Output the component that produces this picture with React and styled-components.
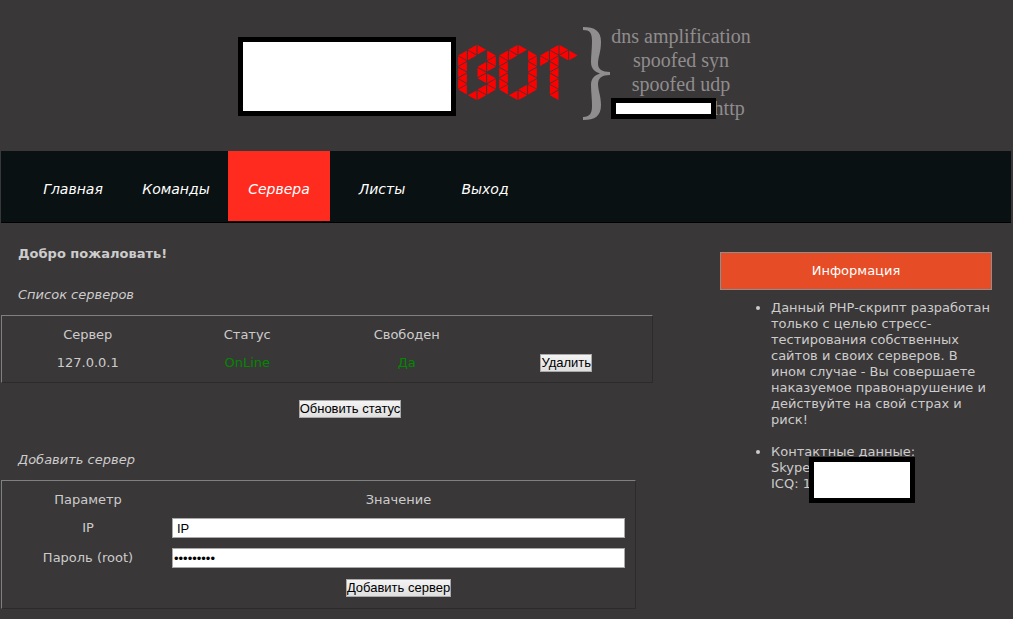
import React from 'react';
import styled, { createGlobalStyle } from 'styled-components';

const GlobalStyle = createGlobalStyle`
  body {
    margin: 0;
    padding: 0 2px 0 1px;
    background: #3a3738;
    color: #ccc;
    font: 13px/16px "DejaVu Sans", Verdana, sans-serif;
  }
`;

const Header = styled.header`
  display: flex;
  justify-content: center;
  align-items: flex-start;
  padding: 24px 23px 0 0;
  height: 127px;
`;

const Mask = styled.div`
  box-sizing: border-box;
  flex: none;
  width: ${props => props.$width}px;
  height: ${props => props.$height}px;
  border: 5px solid #000;
  background: #fff;
  list-style: none;
`;

const NameMask = styled(Mask)`
  margin: 13px 2px 0 0;
`;

const Bot = styled.svg`
  flex: none;
  margin: 20px 6px 0 0;
`;

const Brace = styled.svg`
  flex: none;
  margin: 3px 1px 0 0;
`;

const Features = styled.ul`
  position: relative;
  margin: 0;
  padding: 0;
  list-style: none;
  text-align: center;
  white-space: nowrap;
  color: #8f8d8e;
  font: 20px/24px "Liberation Serif", "Times New Roman", serif;
`;

const LastFeature = styled.li`
  padding-right: 6px;
  text-align: right;
`;

const FeatureMask = styled(Mask)`
  position: absolute;
  left: 0;
  bottom: 1px;
`;

const Nav = styled.nav`
  display: flex;
  gap: 1px;
  height: 71px;
  padding-left: 21px;
  border-bottom: 1px solid #000;
  background: #0a1112;
`;

const NavLink = styled.a`
  width: 102px;
  height: 70px;
  padding-top: 5px;
  box-sizing: border-box;
  line-height: 66px;
  text-align: center;
  text-decoration: none;
  font-size: 14px;
  font-style: italic;
  color: #fff;
  background: ${props => (props.$active ? '#ff2b1f' : 'transparent')};
`;

const Main = styled.div`
  display: grid;
  grid-template-columns: minmax(0, 1fr) 272px;
  gap: 21px;
  align-items: start;
  padding: 23px 19px 11px 0;
`;

const Welcome = styled.h1`
  margin: 0 0 25px;
  padding-left: 17px;
  font-size: 13px;
  line-height: 16px;
`;

const SectionTitle = styled.h2`
  margin: 0 0 12px;
  padding-left: 17px;
  font-size: 13px;
  font-weight: normal;
  font-style: italic;
  line-height: 16px;
`;

const Panel = styled.div`
  margin-right: ${props => props.$right}px;
  padding: 5px 6px;
  border: 1px solid;
  border-color: #808080 #2c2a2b #2c2a2b #808080;
`;

const Table = styled.table`
  width: 100%;
  table-layout: fixed;
  border-collapse: collapse;
  text-align: center;

  th,
  td {
    height: ${props => props.$rowHeight}px;
    padding: 0;
    font-weight: normal;
  }

  th {
    height: 27px;
  }
`;

const LabelCol = styled.col`
  width: 160px;
`;

const Green = styled.td`
  color: #080;
`;

const Button = styled.button`
  display: block;
  height: 18px;
  margin: 0 auto;
  padding: 0;
  border: 1px solid #a9a9a9;
  background: linear-gradient(#f4f4f4, #dfdfdf);
  color: #000;
  white-space: nowrap;
  font: 13px/16px "Liberation Sans", Arial, sans-serif;
`;

const Input = styled.input`
  display: block;
  box-sizing: border-box;
  width: calc(100% - 8px);
  height: 20px;
  margin-left: 4px;
  padding: 0 ${props => (props.type === 'password' ? 1 : 4)}px;
  border: 1px solid #a9a9a9;
  border-radius: 0;
  background: #fff;
  color: #000;
  font: 13px/18px "Liberation Sans", Arial, sans-serif;
`;

const Refresh = styled.div`
  padding: 17px 0 34px;
`;

const InfoTitle = styled.h2`
  margin: 6px 0 10px;
  border: 1px solid #8f8d8e;
  background: #e64d26;
  color: #fff;
  font-size: 13px;
  font-weight: normal;
  line-height: 36px;
  text-align: center;
`;

const InfoList = styled.ul`
  position: relative;
  margin: 0;
  padding-left: 51px;

  li + li {
    margin-top: 16px;
  }
`;

const ContactMask = styled(Mask)`
  position: absolute;
  left: 89px;
  bottom: -11px;
`;

const PITCH = 9.65;
const SIDE = 11.4;

// Cells of one column: [column, half steps from the top, 1 = points right, -1 = points left]
const column = (col, from, to, first) => {
  const cells = [];
  for (let step = from; step <= to; step++) {
    const same = (step - from) % 2 === 0;
    cells.push([col, step, same ? first : -first]);
  }
  return cells;
};

const LETTERS = [
  [
    ...column(0, 1, 7, -1),
    ...column(1, 0, 1, -1),
    ...column(1, 8, 8, -1),
    ...column(2, 0, 0, 1),
    ...column(2, 3, 5, -1),
    ...column(2, 7, 8, -1),
    ...column(3, 1, 3, 1),
    ...column(3, 5, 7, 1),
  ],
  [
    ...column(0, 1, 7, -1),
    ...column(1, 0, 1, -1),
    ...column(1, 8, 8, -1),
    ...column(2, 0, 0, 1),
    ...column(2, 7, 8, -1),
    ...column(3, 1, 7, 1),
  ],
  [
    ...column(0, 1, 2, -1),
    ...column(1, 0, 8, -1),
    ...column(2, 0, 1, 1),
    ...column(3, 1, 1, 1),
  ],
];

function triangle(offset, [col, step, dir]) {
  const top = step * SIDE / 2 + 0.9;
  const bottom = top + SIDE - 1.8;
  const left = offset + col * PITCH + 0.2;
  const right = left + PITCH - 1;
  const base = dir > 0 ? left : right;
  const apex = dir > 0 ? right : left;
  return `M${base} ${top}L${apex} ${(top + bottom) / 2}L${base} ${bottom}Z`;
}

function BotLogo() {
  return (
    <Bot width="119" height="58" role="img" aria-label="BOT">
      {LETTERS.map((cells, i) => (
        <path key={i} fill="#f00" d={cells.map(cell => triangle(i * 41, cell)).join('')} />
      ))}
    </Bot>
  );
}

const links = ['Главная', 'Команды', 'Сервера', 'Листы', 'Выход'];
const servers = [{ ip: '127.0.0.1', status: 'OnLine', free: 'Да' }];

export default function App() {
  return (
    <>
      <GlobalStyle />
      <Header>
        <NameMask $width={218} $height={79} />
        <BotLogo />
        <Brace width="27" height="93" aria-hidden="true">
          <path
            fill="#8f8d8e"
            d="M0 0C12 0 18 4 18 15C18 25 15 30 15 37C15 42 19 45 27 45V48C19 48 15 51 15 57C15 63 18 69 18 78C18 89 12 93 0 93V90C7 90 9 86 9 79C9 71 8 65 8 58C8 51 12 48 17 46.500C12 45 8 42 8 35C8 28 9 22 9 14C9 6 7 3 0 3Z"
          />
        </Brace>
        <Features>
          <li>dns amplification</li>
          <li>spoofed syn</li>
          <li>spoofed udp</li>
          <LastFeature>http</LastFeature>
          <FeatureMask as="li" $width={105} $height={21} />
        </Features>
      </Header>
      <Nav>
        {links.map(link => (
          <NavLink key={link} href="#" $active={link === 'Сервера'}>{link}</NavLink>
        ))}
      </Nav>
      <Main>
        <main>
          <Welcome>Добро пожаловать!</Welcome>
          <SectionTitle>Список серверов</SectionTitle>
          <Panel $right={46}>
            <Table $rowHeight={29}>
              <thead>
                <tr>
                  <th>Сервер</th>
                  <th>Статус</th>
                  <th>Свободен</th>
                  <th aria-label="Действие" />
                </tr>
              </thead>
              <tbody>
                {servers.map(server => (
                  <tr key={server.ip}>
                    <td>{server.ip}</td>
                    <Green>{server.status}</Green>
                    <Green>{server.free}</Green>
                    <td><Button type="button">Удалить</Button></td>
                  </tr>
                ))}
              </tbody>
            </Table>
          </Panel>
          <Refresh>
            <Button type="button">Обновить статус</Button>
          </Refresh>
          <SectionTitle>Добавить сервер</SectionTitle>
          <form onSubmit={event => event.preventDefault()}>
            <Panel $right={63}>
              <Table $rowHeight={30}>
                <colgroup>
                  <LabelCol />
                  <col />
                </colgroup>
                <thead>
                  <tr>
                    <th>Параметр</th>
                    <th>Значение</th>
                  </tr>
                </thead>
                <tbody>
                  <tr>
                    <td><label htmlFor="ip">IP</label></td>
                    <td><Input id="ip" type="text" defaultValue="IP" /></td>
                  </tr>
                  <tr>
                    <td><label htmlFor="password">Пароль (root)</label></td>
                    <td><Input id="password" type="password" defaultValue="passwords" /></td>
                  </tr>
                  <tr>
                    <td />
                    <td><Button type="submit">Добавить сервер</Button></td>
                  </tr>
                </tbody>
              </Table>
            </Panel>
          </form>
        </main>
        <aside>
          <InfoTitle>Информация</InfoTitle>
          <InfoList>
            <li>
              Данный PHP-скрипт разработан только с целью стресс-тестирования
              собственных сайтов и своих серверов. В ином случае - Вы совершаете
              наказуемое правонарушение и действуйте на свой страх и риск!
            </li>
            <li>
              Контактные данные:<br />
              Skype:<br />
              ICQ: 1
            </li>
            <ContactMask as="li" $width={106} $height={46} />
          </InfoList>
        </aside>
      </Main>
    </>
  );
}
